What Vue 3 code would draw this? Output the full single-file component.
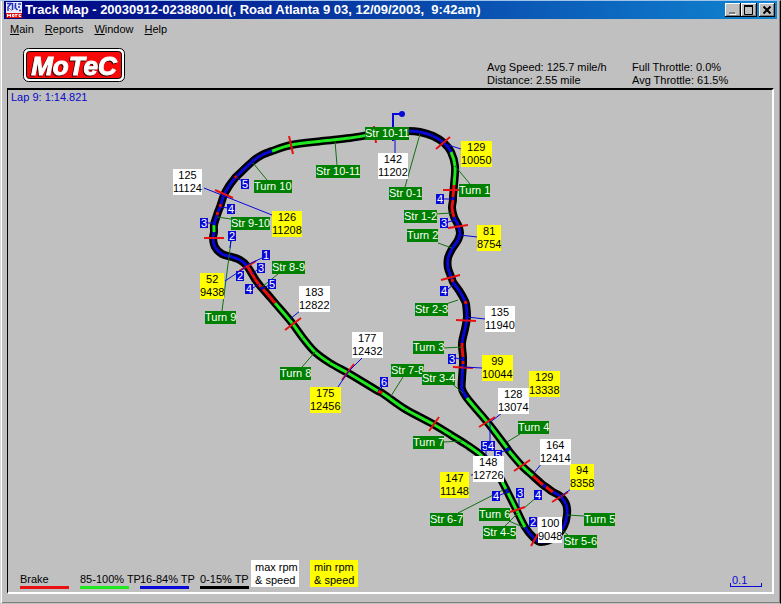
<script setup>
const menus = ['Main', 'Reports', 'Window', 'Help']

const stats = [
  'Avg Speed: 125.7 mile/h',
  'Full Throttle: 0.0%',
  'Distance: 2.55 mile',
  'Avg Throttle: 61.5%',
]

const origin = { x: 8, y: 90 }

const R = '#e81010'
const G = '#20e820'
const B = '#0808d8'

// Centre line of the circuit; the colour holds until the next point.
const track = [
  [385, 133, B], [396, 132, B], [408, 131, B], [420, 132, B], [433, 136, B], [444, 143, B],
  [451, 152, G], [455, 166, G], [454, 185, R], [453, 197, B], [453, 200, R], [452, 208, R],
  [454, 217, B], [458, 225, B], [460, 233, B], [458, 240, B], [452, 249, B], [448, 258, B],
  [448, 268, B], [452, 279, R], [453, 282, B], [460, 292, B], [465, 301, R], [466, 304, B],
  [467, 317, B], [465, 329, B], [462, 343, R], [463, 357, B], [463, 361, R], [463, 364, B],
  [462, 379, B], [462, 389, B], [467, 398, G], [488, 423, G], [507, 448, B], [509, 451, G],
  [522, 466, G], [533, 476, R], [543, 485, B], [546, 487, R], [553, 492, B], [560, 496, B],
  [566, 504, B], [567, 515, B], [564, 526, B], [555, 537, B], [541, 542, B], [533, 537, B],
  [525, 527, G], [517, 511, G], [508, 493, B], [506, 489, G], [496, 471, G], [482, 456, G],
  [467, 445, G], [451, 435, G], [433, 424, G], [405, 409, G], [382, 393, R], [378, 391, G],
  [348, 373, G], [330, 363, G], [315, 352, G], [303, 338, G], [292, 323, G], [275, 303, R],
  [263, 289, B], [261, 287, R], [255, 279, R], [247, 266, B], [240, 260, B], [232, 257, B],
  [222, 254, B], [215, 247, B], [213, 238, B], [214, 232, G], [214, 225, B], [217, 215, R],
  [218, 212, B], [220, 207, R], [221, 204, B], [224, 195, B], [229, 186, B], [235, 178, R],
  [237, 176, B], [253, 161, B], [262, 155, B], [272, 151, G], [291, 145, G], [322, 141, G],
  [350, 138, G], [375, 134, G],
]

const at = (i) => track[(i + track.length) % track.length]

// Catmull-Rom span from point i to point i + 1, as a cubic curve.
function curve(i) {
  const [a, b, c, d] = [at(i - 1), at(i), at(i + 1), at(i + 2)]
  const t = Math.hypot(c[0] - b[0], c[1] - b[1])
  const tangent = (p, q) => {
    const n = Math.hypot(q[0] - p[0], q[1] - p[1]) || 1
    return [((q[0] - p[0]) / n) * (t / 3), ((q[1] - p[1]) / n) * (t / 3)]
  }
  const m = tangent(a, c)
  const n = tangent(b, d)
  return `C${b[0] + m[0]} ${b[1] + m[1]} ${c[0] - n[0]} ${c[1] - n[1]} ${c[0]} ${c[1]}`
}

const spans = track.map((p, i) => ({ d: `M${p[0]} ${p[1]}${curve(i)}`, color: p[2] }))
const outline = `M${track[0][0]} ${track[0][1]}${track.map((_, i) => curve(i)).join('')}Z`

const ticks = [
  [289, 136, 293, 154], [215, 190, 233, 198], [374, 126, 376, 143], [436, 149, 450, 137],
  [443, 190, 461, 190], [448, 228, 468, 225], [441, 280, 460, 275], [456, 320, 476, 321],
  [204, 238, 224, 238], [239, 271, 256, 261], [285, 330, 301, 318], [342, 380, 354, 364],
  [429, 431, 439, 417], [453, 367, 473, 368], [479, 427, 495, 417], [514, 471, 530, 460],
  [552, 502, 568, 492], [510, 512, 525, 507], [531, 546, 538, 534],
]

const turnLeads = [
  [335, 141, 337, 165], [253, 163, 267, 180], [217, 217, 231, 219], [420, 134, 405, 187],
  [455, 166, 470, 184], [434, 214, 452, 213], [438, 243, 452, 248], [446, 304, 458, 300],
  [444, 348, 462, 347], [450, 382, 463, 393], [403, 377, 391, 396], [302, 367, 315, 352],
  [444, 442, 462, 441], [278, 274, 262, 287], [222, 311, 231, 241], [520, 434, 507, 442],
  [584, 516, 567, 515], [458, 513, 503, 490], [509, 521, 525, 528], [505, 526, 518, 513],
  [524, 508, 537, 497], [568, 535, 562, 530],
]

const speedLeads = [
  [204, 188, 272, 215], [395, 140, 395, 153], [445, 144, 461, 149], [460, 235, 477, 237],
  [467, 317, 485, 319], [463, 367, 482, 368], [489, 423, 502, 413], [290, 319, 300, 311],
  [225, 281, 246, 267], [247, 265, 262, 258], [252, 274, 257, 270], [362, 358, 348, 372],
  [348, 372, 338, 387], [534, 473, 542, 463], [560, 497, 571, 489], [471, 475, 478, 474],
  [490, 423, 490, 441], [501, 452, 508, 450], [486, 451, 486, 457], [519, 497, 519, 508],
  [444, 199, 453, 199], [448, 222, 456, 220], [448, 289, 453, 285], [456, 358, 463, 360],
  [208, 223, 215, 223], [221, 207, 228, 208], [236, 177, 242, 181], [253, 288, 259, 284],
  [262, 289, 269, 285], [378, 391, 383, 386], [500, 495, 508, 492], [231, 240, 230, 248],
]

const labels = [
  ['sector', 316, 165, 'Str 10-11'], ['sector', 254, 180, 'Turn 10'], ['sector', 231, 217, 'Str 9-10'],
  ['sector', 365, 127, 'Str 10-11'], ['sector', 389, 187, 'Str 0-1'], ['sector', 459, 184, 'Turn 1'],
  ['sector', 404, 210, 'Str 1-2'], ['sector', 407, 229, 'Turn 2'], ['sector', 415, 303, 'Str 2-3'],
  ['sector', 413, 341, 'Turn 3'], ['sector', 391, 364, 'Str 7-8'], ['sector', 422, 372, 'Str 3-4'],
  ['sector', 280, 367, 'Turn 8'], ['sector', 413, 436, 'Turn 7'], ['sector', 272, 261, 'Str 8-9'],
  ['sector', 205, 311, 'Turn 9'], ['sector', 518, 421, 'Turn 4'], ['sector', 584, 513, 'Turn 5'],
  ['sector', 564, 535, 'Str 5-6'], ['sector', 430, 513, 'Str 6-7'], ['sector', 479, 508, 'Turn 6'],
  ['sector', 483, 526, 'Str 4-5'],
  ['gear', 241, 179, '5'], ['gear', 227, 204, '4'], ['gear', 200, 218, '3'], ['gear', 228, 231, '2'],
  ['gear', 262, 250, '1'], ['gear', 257, 263, '3'], ['gear', 236, 271, '2'], ['gear', 245, 284, '4'],
  ['gear', 268, 279, '5'], ['gear', 436, 194, '4'], ['gear', 440, 218, '3'], ['gear', 440, 286, '4'],
  ['gear', 380, 377, '6'], ['gear', 448, 354, '3'], ['gear', 481, 441, '5'], ['gear', 487, 441, '4'],
  ['gear', 494, 450, '5'], ['gear', 492, 491, '4'], ['gear', 516, 488, '3'], ['gear', 534, 490, '4'],
  ['gear', 529, 517, '2'],
  ['low', 272, 211, '126\n11208'], ['low', 461, 141, '129\n10050'], ['low', 477, 225, '81\n8754'],
  ['low', 200, 273, '52\n9438'], ['low', 310, 387, '175\n12456'], ['low', 482, 355, '99\n10044'],
  ['low', 529, 371, '129\n13338'], ['low', 440, 472, '147\n11148'], ['low', 570, 464, '94\n8358'],
  ['high', 173, 169, '125\n11124'], ['high', 378, 153, '142\n11202'], ['high', 299, 286, '183\n12822'],
  ['high', 485, 306, '135\n11940'], ['high', 352, 332, '177\n12432'], ['high', 498, 388, '128\n13074'],
  ['high', 540, 439, '164\n12414'], ['high', 473, 456, '148\n12726'], ['high', 538, 517, '100\n9048'],
]

const place = (l) => ({ left: `${l[1] - origin.x}px`, top: `${l[2] - origin.y}px` })

const keys = [
  { text: 'Brake', kind: 'brake' },
  { text: '85-100% TP', kind: 'full' },
  { text: '16-84% TP', kind: 'part' },
  { text: '0-15% TP', kind: 'closed' },
]
</script>

<template>
  <div class="window">
    <header class="titlebar">
      <svg class="app-icon" width="16" height="16" viewBox="0 0 16 16">
        <rect width="16" height="16" fill="#e8ecff" />
        <path d="M1 1.500h4L2 5v4M6.500 1v7M9.500 1v5l2 2M12 2h3M12 5h2M13 8.500h2" fill="none" stroke="#2830c0" stroke-width="1.500" />
        <path d="M3 6l3 3M8 3l1 4" stroke="#7880d8" />
        <rect y="11" width="16" height="5" fill="#e01010" />
        <path d="M1.500 15v-3l1.500 2 1.500-2v3M6.500 12.500h1.500v2H6.500zM9 12.500h2.500M10 12.500V15M15 12.500h-2v2h2" fill="none" stroke="#fff" />
      </svg>
      <h1>Track Map - 20030912-0238800.ld(, Road Atlanta 9 03, 12/09/2003,&nbsp; 9:42am)</h1>
      <div class="controls">
        <button type="button" aria-label="Minimize">
          <svg width="12" height="10"><path d="M3 9.500h6" stroke="#fff" /><path d="M2 8h6" stroke="#808080" stroke-width="2" /></svg>
        </button>
        <button type="button" aria-label="Maximize">
          <svg width="12" height="10"><path d="M1.500 1v8.500h8V1" fill="none" stroke="#000" /><path d="M1 1h9" stroke="#000" stroke-width="2" /></svg>
        </button>
        <button type="button" class="close" aria-label="Close">
          <svg width="12" height="10"><path d="M2.500 1.500l7 7M9.500 1.500l-7 7" stroke="#000" stroke-width="2" /></svg>
        </button>
      </div>
    </header>

    <nav class="menubar">
      <button v-for="m in menus" :key="m" type="button"><u>{{ m[0] }}</u>{{ m.slice(1) }}</button>
    </nav>

    <section class="summary">
      <svg class="logo" width="102" height="34" viewBox="0 0 102 34" role="img" aria-label="MoTeC">
        <rect x="0.500" y="0.500" width="101" height="33" rx="5" fill="#fff" stroke="#000" />
        <rect x="3.500" y="3.500" width="95" height="27" rx="3" fill="#f80808" stroke="#000" />
        <text x="51" y="27" text-anchor="middle" class="logo-text">MoTeC</text>
      </svg>
      <div class="stats">
        <span v-for="s in stats" :key="s">{{ s }}</span>
      </div>
    </section>

    <main class="map">
      <svg class="plot" width="764" height="502" viewBox="8 90 764 502">
        <path :d="outline" class="asphalt" />
        <path v-for="(s, i) in spans" :key="i" :d="s.d" :stroke="s.color" class="line" />
        <line v-for="(l, i) in turnLeads" :key="'t' + i" :x1="l[0]" :y1="l[1]" :x2="l[2]" :y2="l[3]" class="lead-turn" />
        <line v-for="(l, i) in ticks" :key="'k' + i" :x1="l[0]" :y1="l[1]" :x2="l[2]" :y2="l[3]" class="tick" />
        <line v-for="(l, i) in speedLeads" :key="'s' + i" :x1="l[0]" :y1="l[1]" :x2="l[2]" :y2="l[3]" class="lead-speed" />
        <path d="M393 141V114H401" class="flag" />
        <circle cx="402" cy="114" r="3" fill="#0808d8" />
      </svg>
      <span v-for="(l, i) in labels" :key="i" class="label" :class="l[0]" :style="place(l)">{{ l[3] }}</span>

      <p class="lap">Lap 9: 1:14.821</p>
      <footer class="legend">
        <span v-for="k in keys" :key="k.kind" class="key" :class="k.kind">{{ k.text }}</span>
        <span class="note">max rpm<br />&amp; speed</span>
        <span class="note yellow">min rpm<br />&amp; speed</span>
        <span class="scale">0.1</span>
      </footer>
    </main>
  </div>
</template>

<style>
body {
  background: #c0c0c0;
}
</style>

<style scoped>
.window {
  box-sizing: border-box;
  min-height: 100vh;
  display: flex;
  flex-direction: column;
  padding: 0 3px 9px;
  border: 1px solid #a0c4ec;
  border-left-color: #d8d8d8;
  border-right-color: #000;
  border-bottom-color: #c0c0c0;
  box-shadow: inset 1px 0 #fff, inset -1px -1px #808080;
  background: #c0c0c0;
  color: #000;
  font: 11px/13px "Liberation Sans", Arial, sans-serif;
}

button {
  margin: 0;
  padding: 0;
  border: 0;
  background: #c0c0c0;
  color: inherit;
  font: inherit;
}

.titlebar {
  display: flex;
  align-items: center;
  height: 18px;
  padding: 0 2px;
  gap: 3px;
  background: linear-gradient(to right, #000080, #1084d0);
  color: #fff;
}

h1 {
  flex: 1;
  margin: 0;
  font-size: 13px;
  line-height: 18px;
  white-space: nowrap;
  overflow: hidden;
}

.app-icon {
  flex: none;
}

.controls {
  display: flex;
}

.controls button {
  width: 16px;
  height: 14px;
  display: flex;
  align-items: center;
  justify-content: center;
  box-shadow: inset -1px -1px #000, inset 1px 1px #fff, inset -2px -2px #808080;
}

.controls .close {
  margin-left: 2px;
}

.menubar {
  display: flex;
  gap: 11px;
  padding: 4px 6px 5px;
}

.summary {
  display: flex;
  justify-content: space-between;
  align-items: flex-end;
  height: 47px;
  box-sizing: border-box;
  padding: 0 5px 0 19px;
}

.logo {
  margin-bottom: 6px;
}

.stats {
  margin-bottom: 1px;
}

.logo-text {
  font: italic bold 26px "Liberation Sans", Arial, sans-serif;
  fill: #fff;
  stroke: #fff;
  stroke-width: 1px;
  filter: drop-shadow(-1px 1px 0 #400000);
}

.stats {
  display: grid;
  grid-template-columns: 145px 140px;
  white-space: nowrap;
}

.map {
  position: relative;
  flex: 1;
  display: flex;
  flex-direction: column;
  justify-content: space-between;
  margin: 0 3px 0 3px;
  border: 2px solid;
  border-width: 2px 2px 2px 1px;
  border-color: #000 #fff #fff #000;
}

.plot {
  position: absolute;
  left: 0;
  top: 0;
}

.asphalt {
  fill: none;
  stroke: #000;
  stroke-width: 8px;
  stroke-linejoin: round;
}

.line {
  fill: none;
  stroke-width: 3px;
}

.tick {
  stroke: #e81010;
  stroke-width: 2px;
}

.lead-turn {
  stroke: #107010;
}

.lead-speed {
  stroke: #0808d8;
}

.flag {
  fill: none;
  stroke: #0808d8;
  stroke-width: 2px;
}

.label {
  position: absolute;
  text-align: center;
  white-space: pre;
}

.sector {
  background: #008000;
  color: #fff;
}

.gear {
  padding: 0 1px;
  line-height: 10px;
  background: #0808d8;
  color: #fff;
}

.high {
  background: #fff;
}

.low {
  background: #ff0;
}

.lap {
  margin: 0;
  padding: 1px 3px;
  color: #0808c8;
}

.legend {
  display: flex;
  align-items: flex-end;
  gap: 11px;
  padding: 0 10px 3px 12px;
}

.key {
  width: 49px;
  border-bottom: 3px solid #000;
  white-space: nowrap;
}

.brake {
  border-color: #e81010;
}

.full {
  border-color: #20e820;
}

.part {
  border-color: #0808d8;
}

.note {
  box-sizing: border-box;
  width: 48px;
  margin: 0 0 2px -9px;
  padding: 1px 0 0 4px;
  background: #fff;
  white-space: nowrap;
}

.yellow {
  margin-left: 0;
  background: #ff0;
}

.scale {
  position: relative;
  width: 30px;
  margin: 0 0 2px auto;
  padding-left: 2px;
  line-height: 12px;
  border-bottom: 1px solid #0808d8;
  color: #0808d8;
}

.scale::after {
  content: "";
  position: absolute;
  inset: auto 0 0 0;
  height: 3px;
  border: solid #0808d8;
  border-width: 0 1px;
}
</style>
